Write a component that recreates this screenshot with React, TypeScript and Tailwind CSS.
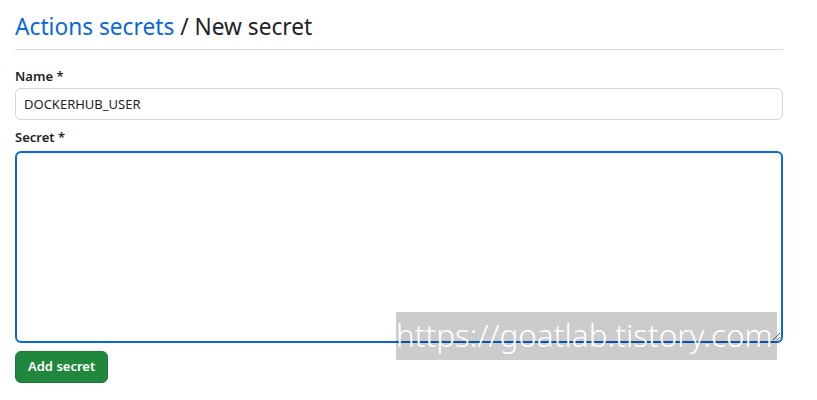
export default function App() {
  return (
    <div
      className="relative h-[400px] w-[817px] bg-white text-[#1f2328]"
      style={{ fontFamily: '"Noto Sans", "Open Sans", sans-serif' }}
    >
      <div className="w-[768px] ml-[15px] pt-[9px]">
        <h2 className="border-b border-[#d8dee4] pb-[4px] text-[22.7px] leading-[36px] font-normal">
          <a className="text-[#0969da]">Actions secrets</a>
          <span> / New secret</span>
        </h2>

        <form className="mt-[16px]">
          <label className="block text-[13px] font-semibold leading-[20px] mb-[2px]">Name *</label>
          <input
            type="text"
            defaultValue="DOCKERHUB_USER"
            className="block h-[32px] w-full rounded-[6px] border border-[#d0d7de] px-[8px] text-[13px] text-[#1f2328] outline-none"
          />

          <label className="block mt-[7px] text-[13px] font-semibold leading-[20px] mb-[4px]">Secret *</label>
          <textarea className="block h-[192px] w-full rounded-[6px] border-2 border-[#0969da] px-[8px] outline-none" />

          <button
            type="button"
            className="mt-[8px] h-[32px] rounded-[6px] bg-[#1f883d] px-[12px] text-[13px] font-semibold text-white border border-[#1b7a37]"
          >
            Add secret
          </button>
        </form>
      </div>

      <div
        className="absolute left-[396px] top-[312px] h-[48px] w-[381px] bg-black/20 text-white text-[31.5px] font-light leading-[46px] overflow-hidden whitespace-nowrap"
        style={{ fontFamily: '"Noto Sans", sans-serif' }}
      >
        https://goatlab.tistory.com
      </div>
    </div>
  );
}
